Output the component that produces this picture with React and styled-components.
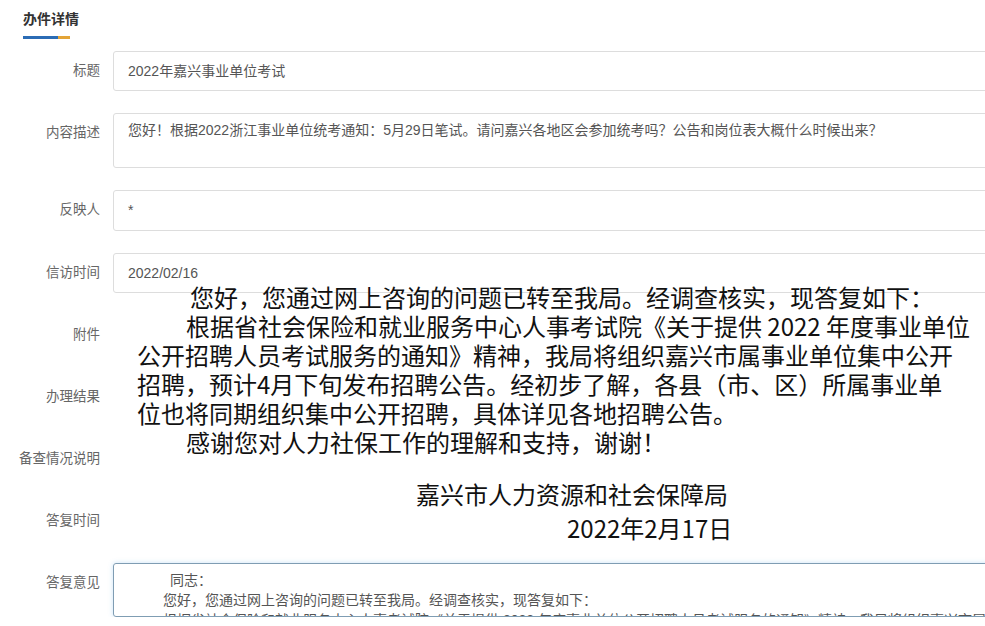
import React from "react";
import styled, { createGlobalStyle } from "styled-components";

const GlobalStyle = createGlobalStyle`
  html, body {
    margin: 0;
    padding: 0;
    background: #fff;
    overflow: hidden;
  }
  body {
    font-family: "Liberation Sans", "Noto Sans CJK SC", sans-serif;
    font-size: 14px;
    color: #555;
  }
`;

const Page = styled.div`
  width: 1120px;
  padding: 10px 0 0 0;
`;

const Header = styled.div`
  padding-left: 23px;
  margin-bottom: 12px;
`;

const Title = styled.h2`
  margin: 0;
  font-size: 14px;
  line-height: 18px;
  font-weight: bold;
  color: #333;
`;

const Underline = styled.div`
  margin-top: 8px;
  width: 47px;
  height: 3px;
  background: linear-gradient(to right, #2b6cb5 0, #2b6cb5 35px, #e3a437 35px, #e3a437 47px);
`;

const Form = styled.div`
  display: flex;
  flex-direction: column;
  gap: 22px;
`;

const Row = styled.div`
  display: flex;
  align-items: flex-start;
  gap: 13px;
`;

const Label = styled.div`
  width: 100px;
  flex-shrink: 0;
  text-align: right;
  color: #666;
  font-size: 13.5px;
  line-height: 40px;
  white-space: nowrap;
`;

const Value = styled.div`
  position: relative;
  flex: 1;
  min-height: 40px;
`;

const Input = styled.div`
  box-sizing: border-box;
  height: ${(p) => p.$h || 40}px;
  border: 1px solid #ddd;
  border-radius: 3px;
  padding: 0 14px;
  line-height: ${(p) => (p.$h || 40) - 2}px;
  color: #555;
  white-space: nowrap;
`;

const TextArea = styled.div`
  box-sizing: border-box;
  height: ${(p) => p.$h || 54}px;
  border: 1px solid ${(p) => (p.$focused ? "#7f9db3" : "#ddd")};
  border-radius: 3px;
  padding: 6px 14px;
  line-height: 20px;
  color: #555;
  overflow: hidden;
  box-shadow: ${(p) => (p.$focused ? "0 0 5px rgba(102, 175, 233, 0.35)" : "none")};
`;

const TextLine = styled.div`
  white-space: nowrap;
  padding-left: ${(p) => p.$indent || 0}px;
`;

const Result = styled.div`
  position: absolute;
  top: -95px;
  left: 24px;
  font-family: "Noto Sans CJK SC", "Liberation Sans", sans-serif;
  font-size: 24px;
  line-height: 29px;
  color: #111;
`;

const ResultLine = styled.div`
  white-space: nowrap;
  padding-left: ${(p) => p.$indent || 0}px;
  margin-top: ${(p) => p.$gap || 0}px;
`;

export default function App() {
  return (
    <>
      <GlobalStyle />
      <Page>
        <Header>
          <Title>办件详情</Title>
          <Underline />
        </Header>
        <Form>
          <Row>
            <Label>标题</Label>
            <Value>
              <Input>2022年嘉兴事业单位考试</Input>
            </Value>
          </Row>
          <Row>
            <Label>内容描述</Label>
            <Value>
              <TextArea $h={55}>
                <TextLine>
                  您好！根据2022浙江事业单位统考通知：5月29日笔试。请问嘉兴各地区会参加统考吗？公告和岗位表大概什么时候出来？
                </TextLine>
              </TextArea>
            </Value>
          </Row>
          <Row>
            <Label>反映人</Label>
            <Value>
              <Input $h={41}>*</Input>
            </Value>
          </Row>
          <Row>
            <Label>信访时间</Label>
            <Value>
              <Input>2022/02/16</Input>
            </Value>
          </Row>
          <Row>
            <Label>附件</Label>
            <Value />
          </Row>
          <Row>
            <Label>办理结果</Label>
            <Value>
              <Result>
                <ResultLine $indent={53}>
                  您好，您通过网上咨询的问题已转至我局。经调查核实，现答复如下：
                </ResultLine>
                <ResultLine $indent={49}>
                  根据省社会保险和就业服务中心人事考试院《关于提供 2022 年度事业单位
                </ResultLine>
                <ResultLine>
                  公开招聘人员考试服务的通知》精神，我局将组织嘉兴市属事业单位集中公开
                </ResultLine>
                <ResultLine>
                  招聘，预计4月下旬发布招聘公告。经初步了解，各县（市、区）所属事业单
                </ResultLine>
                <ResultLine>位也将同期组织集中公开招聘，具体详见各地招聘公告。</ResultLine>
                <ResultLine $indent={49}>感谢您对人力社保工作的理解和支持，谢谢！</ResultLine>
                <ResultLine $indent={279} $gap={23}>
                  嘉兴市人力资源和社会保障局
                </ResultLine>
                <ResultLine $indent={430} $gap={5}>
                  2022年2月17日
                </ResultLine>
              </Result>
            </Value>
          </Row>
          <Row>
            <Label>备查情况说明</Label>
            <Value />
          </Row>
          <Row>
            <Label>答复时间</Label>
            <Value />
          </Row>
          <Row>
            <Label>答复意见</Label>
            <Value>
              <TextArea $focused>
                <TextLine $indent={42}>同志：</TextLine>
                <TextLine $indent={35}>
                  您好，您通过网上咨询的问题已转至我局。经调查核实，现答复如下：
                </TextLine>
                <TextLine $indent={35}>
                  根据省社会保险和就业服务中心人事考试院《关于提供 2022 年度事业单位公开招聘人员考试服务的通知》精神，我局将组织嘉兴市属事业单位集中公开招聘
                </TextLine>
              </TextArea>
            </Value>
          </Row>
        </Form>
      </Page>
    </>
  );
}
